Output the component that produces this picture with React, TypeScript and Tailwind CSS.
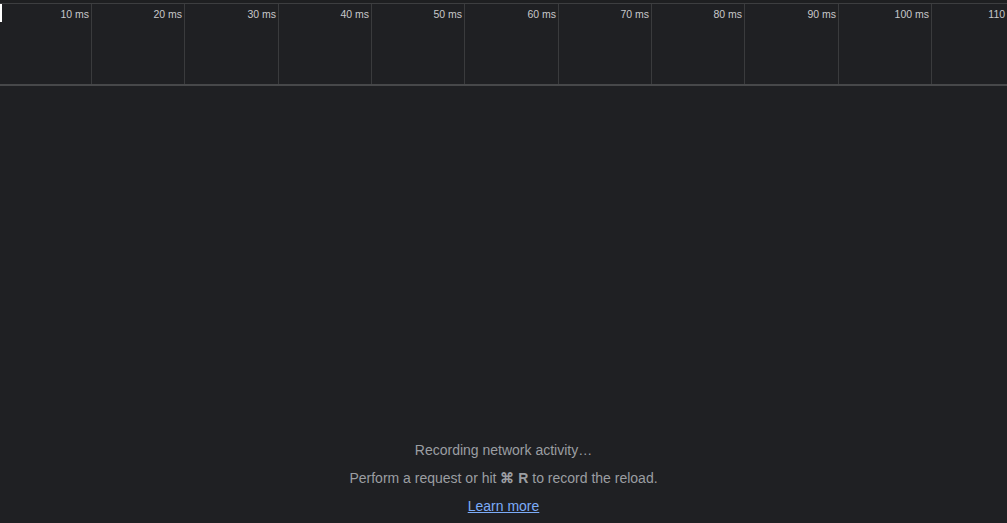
import React from "react";

const cols: { w: number; label: string }[] = [
  { w: 92, label: "10 ms" },
  { w: 93, label: "20 ms" },
  { w: 94, label: "30 ms" },
  { w: 93, label: "40 ms" },
  { w: 93, label: "50 ms" },
  { w: 94, label: "60 ms" },
  { w: 93, label: "70 ms" },
  { w: 93, label: "80 ms" },
  { w: 94, label: "90 ms" },
  { w: 93, label: "100 ms" },
  { w: 93, label: "110 ms" },
];

export default function App() {
  return (
    <div
      className="w-[1007px] h-[523px] bg-[#1f2023] flex flex-col overflow-hidden"
      style={{ fontFamily: '"Liberation Sans", Arial, sans-serif' }}
    >
      <div className="h-[3px] bg-[#1e1f21]" />
      <div className="h-px bg-[#3d3e40]" />
      <div className="h-[80px] flex relative overflow-hidden">
        <div className="absolute left-0 top-0 w-[2px] h-[18px] bg-white" />
        {cols.map((c, i) => (
          <div
            key={i}
            style={{ width: c.w }}
            className="shrink-0 border-r border-[#3a3b3d] flex justify-end pr-[2px] pt-[4px]"
          >
            <span className="text-[10.5px] leading-[13px] text-[#c7c8ca] whitespace-nowrap">{c.label}</span>
          </div>
        ))}
      </div>
      <div className="h-[2px] bg-[#47484a]" />
      <div className="flex-1 flex flex-col items-center justify-end pb-[3px] text-[14px] text-[#9b9ea2]">
        <div className="leading-[28px]">Recording network activity…</div>
        <div className="leading-[28px]">
          Perform a request or hit <span className="font-bold">⌘ R</span> to record the reload.
        </div>
        <a href="#" className="leading-[28px] text-[#7cacf8] underline">
          Learn more
        </a>
      </div>
    </div>
  );
}
